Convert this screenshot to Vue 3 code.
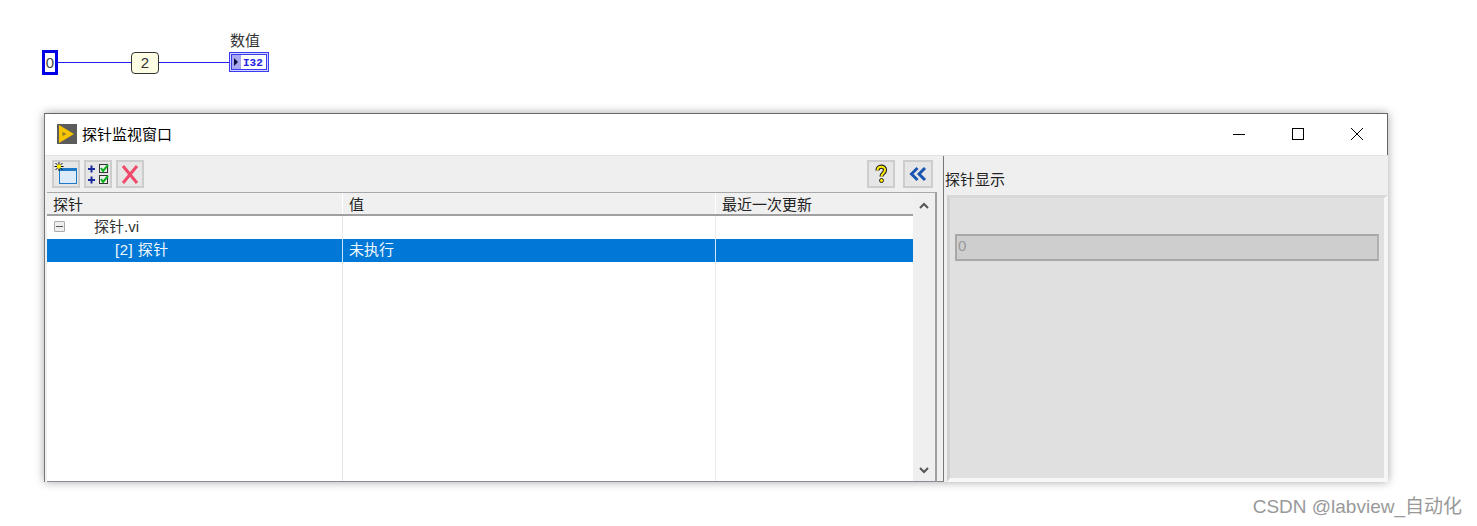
<script setup>
const columns = [
  { label: '探针', cls: 'c1' },
  { label: '值', cls: 'c2' },
  { label: '最近一次更新', cls: 'c3' }
]
</script>

<template>
  <div class="page">
    <div class="diagram">
      <div class="wire w1"></div>
      <div class="wire w2"></div>
      <div class="const">0</div>
      <div class="probe">2</div>
      <div class="label">数值</div>
      <div class="ind">
        <div class="ind-inner">
          <svg width="34" height="12" viewBox="0 0 34 12">
            <path d="M2 2 L6 6 L2 10 Z" fill="#101040" />
            <text x="11" y="10" class="i32">I32</text>
          </svg>
        </div>
      </div>
    </div>

    <div class="window">
      <div class="titlebar">
        <svg class="appicon" width="20" height="20" viewBox="0 0 20 20">
          <rect width="20" height="20" fill="#5c5c5c" />
          <path d="M2 1 L17 10 L2 19 Z" fill="#f6c400" />
          <path d="M5.500 8 L9.500 10 L5.500 12 Z" fill="#8a7a30" />
        </svg>
        <span class="title">探针监视窗口</span>
        <div class="winbtns">
          <svg width="12" height="12" viewBox="0 0 12 12"><path d="M0 6.500H12" stroke="#000" /></svg>
          <svg width="12" height="12" viewBox="0 0 12 12"><rect x="0.500" y="0.500" width="11" height="11" fill="none" stroke="#000" /></svg>
          <svg width="12" height="12" viewBox="0 0 12 12"><path d="M0 0L12 12M12 0L0 12" stroke="#000" /></svg>
        </div>
      </div>

      <div class="body">
        <div class="left">
          <div class="toolbar">
            <button class="tb">
              <svg width="24" height="24" viewBox="0 0 24 24">
                <rect x="5.500" y="6.500" width="17" height="15" fill="#dcebfb" stroke="#1f78c8" />
                <rect x="5" y="6" width="18" height="3" fill="#1f78c8" />
                <path d="M5 0V9M0.500 4.500H9.500M1.500 1L8.500 8M8.500 1L1.500 8" stroke="#111" />
                <path d="M3 4.500H7M5 2.500V6.500" stroke="#ffee00" stroke-width="2.500" />
              </svg>
            </button>
            <button class="tb">
              <svg width="24" height="24" viewBox="0 0 24 24">
                <path d="M2 7H9M5.500 3.500V10.500M2 18H9M5.500 14.500V21.500" stroke="#1a2a9a" stroke-width="2" />
                <rect x="13.500" y="2.500" width="8" height="8" fill="#eee" stroke="#333" />
                <rect x="13.500" y="13.500" width="8" height="8" fill="#eee" stroke="#333" />
                <path d="M15 6L17 9L22 3M15 17L17 20L22 14" stroke="#10b020" stroke-width="2" fill="none" />
              </svg>
            </button>
            <button class="tb">
              <svg width="24" height="24" viewBox="0 0 24 24">
                <path d="M5 4L19 21M19 4L5 21" stroke="#f04a6a" stroke-width="3" />
              </svg>
            </button>
            <div class="spacer"></div>
            <button class="tb">
              <svg width="24" height="24" viewBox="0 0 24 24">
                <path d="M8.500 8.500C8.500 3.500 16 3.500 16 8C16 11.500 12.500 11 12.500 14.500" fill="none" stroke="#222" stroke-width="4.200" />
                <path d="M8.500 8.500C8.500 3.500 16 3.500 16 8C16 11.500 12.500 11 12.500 14.500" fill="none" stroke="#ffee00" stroke-width="2" />
                <circle cx="12.500" cy="18.500" r="2" fill="#ffee00" stroke="#222" />
              </svg>
            </button>
            <button class="tb back">
              <svg width="24" height="24" viewBox="0 0 24 24">
                <path d="M11.500 6L5.500 12L11.500 18M19 6L13 12L19 18" fill="none" stroke="#1c55b0" stroke-width="3" />
              </svg>
            </button>
          </div>

          <div class="tablebox">
            <div class="table">
              <div class="thead">
                <div v-for="c in columns" :key="c.label" class="th" :class="c.cls">{{ c.label }}</div>
              </div>
              <div class="row">
                <div class="td c1 name">
                  <span class="minus"></span>
                  <span>探针.vi</span>
                </div>
                <div class="td c2"></div>
                <div class="td c3"></div>
              </div>
              <div class="row selected">
                <div class="td c1 sub">[2] 探针</div>
                <div class="td c2">未执行</div>
                <div class="td c3"></div>
              </div>
              <div class="fill">
                <div class="c1"></div>
                <div class="c2"></div>
                <div class="c3"></div>
              </div>
            </div>
            <div class="scrollbar">
              <svg width="10" height="8" viewBox="0 0 10 8"><path d="M1 6L5 2L9 6" fill="none" stroke="#555" stroke-width="2" /></svg>
              <svg width="10" height="8" viewBox="0 0 10 8"><path d="M1 2L5 6L9 2" fill="none" stroke="#555" stroke-width="2" /></svg>
            </div>
          </div>
        </div>

        <div class="splitter"></div>

        <div class="right">
          <div class="right-head">探针显示</div>
          <div class="panel">
            <div class="field">0</div>
          </div>
        </div>
      </div>
    </div>

    <div class="mark">CSDN @labview_自动化</div>
  </div>
</template>

<style>
html, body { margin: 0; background: #fff; }
</style>

<style scoped>
.page {
  position: relative;
  width: 1477px;
  height: 526px;
  overflow: hidden;
  background: #fff;
  font-family: "Liberation Sans", "Noto Sans CJK SC", sans-serif;
  font-size: 15px;
  color: #222;
}
.diagram { position: relative; height: 113px; }
.wire { position: absolute; height: 1px; top: 62px; background: #2222ee; }
.w1 { left: 58px; width: 73px; }
.w2 { left: 159px; width: 71px; }
.const {
  position: absolute; left: 42px; top: 50px; width: 10px; height: 19px;
  border: 3px solid #0000e6; background: #fff;
  font-size: 15px; line-height: 19px; text-align: center; color: #444;
}
.probe {
  position: absolute; left: 131px; top: 52px; width: 26px; height: 20px;
  border: 1px solid #333; border-radius: 4px; background: #fdfde4;
  text-align: center; line-height: 20px; font-size: 15px; color: #333;
}
.label { position: absolute; left: 230px; top: 32px; font-size: 15px; line-height: 18px; color: #333; }
.ind {
  position: absolute; left: 229px; top: 52px; width: 40px; height: 20px;
  box-sizing: border-box; border: 1px solid #3a3af0; background: #d4d4fc;
  padding: 1px;
}
.ind-inner {
  height: 16px; box-sizing: border-box; border: 1px solid #3a3af0; display: flex; align-items: center;
  background: linear-gradient(to right, #a8a8f0 0 9px, #fff 9px);
}
.ind-inner svg { display: block; }
.i32 { font-family: "Liberation Mono", monospace; font-size: 11px; font-weight: 700; fill: #2222dd; }

.window {
  margin-left: 44px;
  width: 1344px;
  height: 369px;
  box-sizing: border-box;
  background: #fff;
  border-top: 1px solid #666;
  border-left: 1px solid #777;
  box-shadow: 0 0 9px rgba(0, 0, 0, 0.35);
  display: flex;
  flex-direction: column;
}
.titlebar { height: 41px; flex: none; display: flex; align-items: center; padding: 0 0 2px 12px; box-sizing: border-box; border-right: 1px solid #666; }
.appicon { flex: none; }
.title { margin-left: 5px; font-size: 15px; color: #000; }
.winbtns { margin-left: auto; display: flex; gap: 47px; padding-right: 24px; }
.winbtns svg { display: block; }

.body { flex: 1; display: flex; min-height: 0; background: #efefef; border-top: 1px solid #e2e2e2; }
.left { width: 892px; flex: none; display: flex; flex-direction: column; box-sizing: border-box; }
.toolbar { height: 36px; flex: none; box-sizing: border-box; display: flex; align-items: center; gap: 4px; padding: 0 4px 0 7px; }
.spacer { flex: 1; }
.tb {
  width: 28px; height: 28px; padding: 0; margin: 0; box-sizing: border-box;
  border: 2px solid #cdcdcd; background: #e6e6e6;
  display: flex; align-items: center; justify-content: center;
}
.tb svg { flex: none; }
.tb.back { margin-left: 4px; width: 30px; }
.tablebox {
  flex: 1; min-height: 0; display: flex; margin-left: 2px;
  border-top: 1px solid #a9a9a9; border-right: 2px solid #a0a0a0; border-bottom: 1px solid #8a8a98;
  background: #fff;
}
.table { flex: 1; display: flex; flex-direction: column; min-width: 0; }
.thead { height: 23px; flex: none; display: flex; background: #f0f0f0; border-bottom: 2px solid #a0a0a0; box-sizing: border-box; }
.th { line-height: 23px; padding-left: 6px; box-sizing: border-box; color: #222; }
.c1 { width: 295px; flex: none; box-sizing: border-box; }
.c2 { width: 373px; flex: none; box-sizing: border-box; border-left: 1px solid #e8e8e8; }
.c3 { flex: 1; box-sizing: border-box; border-left: 1px solid #e8e8e8; }
.thead .c2, .thead .c3 { border-left: 1px solid #fff; }
.row { height: 23px; flex: none; display: flex; background: #fff; }
.td { line-height: 21px; padding-left: 6px; color: #333; }
.name { display: flex; align-items: center; padding: 0 0 2px 7px; }
.minus {
  width: 11px; height: 11px; box-sizing: border-box; border: 1px solid #aaa; border-radius: 1px; margin-right: 29px;
  background: linear-gradient(#555, #555) center / 7px 1px no-repeat #eee;
}
.selected { background: #0078d7; }
.selected .td { color: #f2f8ff; border-color: #cfe4f6; }
.selected .sub { padding-left: 68px; letter-spacing: 0.5px; }
.fill { flex: 1; display: flex; }
.scrollbar {
  width: 22px; flex: none; background: #efefef;
  display: flex; flex-direction: column; justify-content: space-between; align-items: center;
  padding: 9px 0 7px; box-sizing: border-box;
}
.splitter { width: 7px; flex: none; background: #efefef; box-sizing: border-box; border-right: 1px solid #777; border-bottom: 1px solid #888; }
.right { flex: 1; display: flex; flex-direction: column; min-width: 0; }
.right-head { height: 39px; flex: none; box-sizing: border-box; padding: 15px 0 0 1px; line-height: 18px; font-size: 15px; color: #222; }
.panel {
  flex: 1; box-sizing: border-box; background: #e0e0e0; margin-left: 3px;
  border-top: 3px solid #d8d8d8; border-left: 3px solid #d0d0d0; border-right: 4px solid #f6f6f6; border-bottom: 4px solid #f8f8f8;
  padding: 36px 5px 0 5px;
}
.field {
  height: 27px; box-sizing: border-box; background: #cecece; border: 2px solid #a8a8a8;
  border-right-color: #b0b0b0; line-height: 20px; padding-left: 1px; font-size: 15px; color: #999;
}
.mark {
  position: absolute; right: 15px; top: 496px; font-size: 19px; line-height: 22px; color: #999;
}
</style>
